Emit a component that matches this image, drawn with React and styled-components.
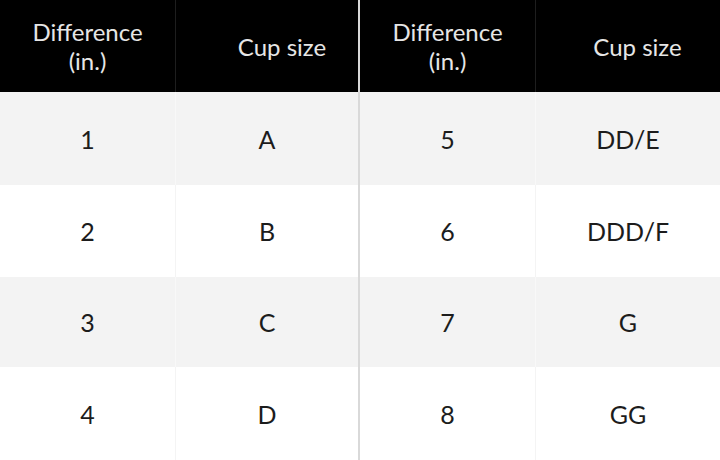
import React from 'react'
import styled, { createGlobalStyle } from 'styled-components'

const GlobalStyle = createGlobalStyle`
  html, body { margin: 0; padding: 0; background: #fff; }
  body { font-family: Lato, "Open Sans", sans-serif; }
`

const left = [['1', 'A'], ['2', 'B'], ['3', 'C'], ['4', 'D']]
const right = [['5', 'DD/E'], ['6', 'DDD/F'], ['7', 'G'], ['8', 'GG']]

const Table = ({ rows, width, shift }) => (
  <Grid $width={width}>
    <HeadCell>Difference<br />(in.)</HeadCell>
    <HeadCell $shift={shift}>Cup size</HeadCell>
    {rows.map(([d, c], i) => (
      <React.Fragment key={d}>
        <Cell $shade={i % 2 === 0}>{d}</Cell>
        <Cell $shade={i % 2 === 0}>{c}</Cell>
      </React.Fragment>
    ))}
  </Grid>
)

const App = () => (
  <>
    <GlobalStyle />
    <Page>
      <Table rows={left} width={358} shift={30} />
      <Divider />
      <Table rows={right} width={360} shift={19} />
    </Page>
  </>
)

const Page = styled.div`
  display: flex;
  width: 720px;
  height: 460px;
  overflow: hidden;
`

const Divider = styled.div`
  width: 2px;
  background: #d9d9d9;
`

const Grid = styled.div`
  display: grid;
  width: ${p => p.$width}px;
  grid-template-columns: 175px 1fr;
  grid-template-rows: 92px 93px 92px 90px 93px;
`

const HeadCell = styled.div`
  display: flex;
  align-items: center;
  justify-content: center;
  text-align: center;
  background: #000;
  color: #e6e6e6;
  font-size: 24px;
  line-height: 29px;
  padding-left: ${p => p.$shift || 0}px;
  border-left: 1px solid #1e1e1e;
  &:nth-child(1) { border-left: none; }
`

const Cell = styled.div`
  display: flex;
  align-items: center;
  justify-content: center;
  background: ${p => (p.$shade ? '#f3f3f3' : '#fff')};
  color: #1c1c1c;
  font-size: 25px;
  border-left: 1px solid ${p => (p.$shade ? '#f8f8f8' : '#f4f4f4')};
  &:nth-child(odd) { border-left: none; }
`

export default App
